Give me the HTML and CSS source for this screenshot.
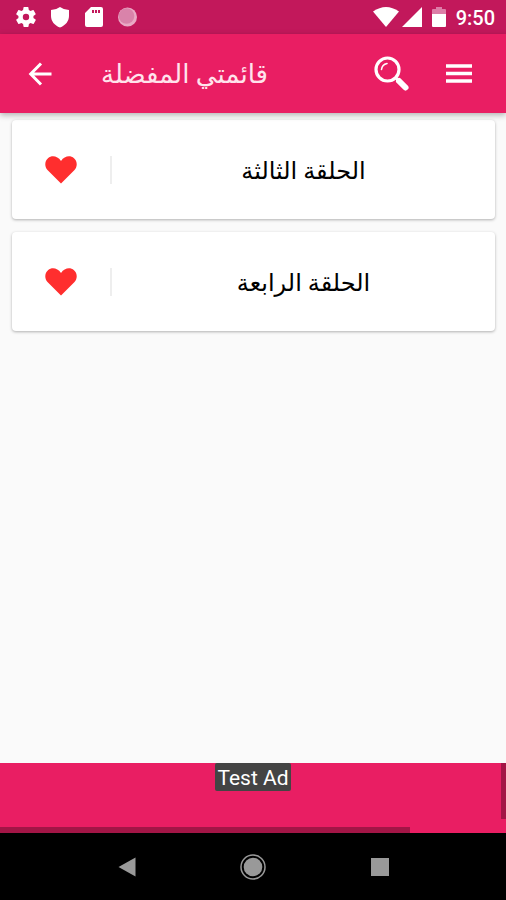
FILE: index.html
```html
<!DOCTYPE html>
<html lang="ar" dir="ltr">
<head>
<meta charset="utf-8">
<meta name="viewport" content="width=device-width, initial-scale=1">
<title>قائمتي المفضلة</title>
<link rel="stylesheet" href="styles.css">
</head>
<body>
<div class="status">
  <div class="status-left">
    <svg class="status-icon" viewBox="0 0 24 24"><path fill="#fff" d="M19.4 13c0-.3.1-.6.1-1s0-.7-.1-1l2.1-1.600c.2-.2.3-.4.1-.6l-2-3.500c-.1-.2-.4-.3-.6-.2l-2.500 1c-.5-.4-1.100-.7-1.700-1l-.4-2.600c0-.3-.2-.5-.4-.5h-4c-.3 0-.5.2-.5.4l-.4 2.700c-.6.2-1.100.6-1.700 1L4.900 5.100c-.2-.1-.5 0-.6.2l-2 3.500c-.1.2-.1.5.1.6L4.500 11c0 .3-.1.7-.1 1s0 .7.1 1l-2.100 1.600c-.2.2-.3.4-.1.6l2 3.500c.1.2.4.3.6.2l2.500-1c.5.4 1.100.7 1.700 1l.4 2.600c0 .3.2.4.5.4h4c.2 0 .4-.2.5-.4l.4-2.600c.6-.3 1.200-.6 1.700-1l2.500 1c.2.1.5 0 .6-.2l2-3.500c.1-.2.1-.5-.1-.6zM12 15.200a3.200 3.200 0 1 1 0-6.400 3.200 3.200 0 0 1 0 6.400z"/></svg>
    <svg class="status-icon" viewBox="0 0 24 24"><path fill="#fff" d="M12 2q4 3 9 3v6c0 5-3.500 9.500-9 11.500-5.500-2-9-6.500-9-11.500V5q5 0 9-3z"/></svg>
    <svg class="status-icon" viewBox="0 0 24 24"><path fill="#fff" fill-rule="evenodd" d="M9 2h10a2 2 0 0 1 2 2v16a2 2 0 0 1-2 2H5a2 2 0 0 1-2-2V8zM10 5v3h2V5zM13 5v3h2V5zM16 5v3h2V5z"/></svg>
    <svg class="status-icon" viewBox="0 0 24 24"><circle cx="11.500" cy="12" r="9.500" fill="#eaa9c5"/><path fill="#fff" d="M18.500 5.500A9.500 9.500 0 0 1 6 20 9.500 9.500 0 0 0 18.500 5.500z"/><circle cx="10.500" cy="11" r="7.800" fill="#d983aa"/></svg>
  </div>
  <div class="status-right">
    <svg class="wifi" viewBox="0 0 26 20"><path fill="#fff" d="M0 4.500Q13-4.500 26 4.500L13 20z"/></svg>
    <svg class="signal" viewBox="0 0 20 20"><path fill="#fff" d="M20 0v20H0z"/></svg>
    <svg class="battery" viewBox="0 0 14 22"><path fill="#dd7da7" d="M4 1h6v2h3a1 1 0 0 1 1 1v4H0V4a1 1 0 0 1 1-1h3z"/><path fill="#fff" d="M0 8h14v12a1 1 0 0 1-1 1H1a1 1 0 0 1-1-1z"/></svg>
    <span class="clock">9:50</span>
  </div>
</div>
<header class="toolbar">
  <button class="tool" aria-label="رجوع"><svg width="24" height="24" viewBox="0 0 24 24"><path d="M23.500 12H3M13 1.500L2.700 12 13 22.500" fill="none" stroke="#fff" stroke-width="3"/></svg></button>
  <h1 class="title" dir="rtl">قائمتي المفضلة</h1>
  <button class="tool" aria-label="بحث"><svg width="36" height="36" viewBox="0 0 36 36"><g fill="none" stroke="#fff"><circle cx="13.500" cy="13.500" r="11.500" stroke-width="3.200"/><path d="M7.500 13.500a7 7 0 0 1 5.500-6" stroke-width="1.600" stroke-linecap="round"/><path d="M21.500 21.500l3 3" stroke-width="3"/><path d="M25 25l6.500 6.500" stroke-width="6" stroke-linecap="round"/></g></svg></button>
  <button class="tool" aria-label="القائمة"><svg width="26" height="19" viewBox="0 0 26 19"><path d="M0 2h26M0 9.500h26M0 17h26" stroke="#fff" stroke-width="3.400"/></svg></button>
</header>
<main class="list">
  <article class="card">
    <button class="fav" aria-label="المفضلة"><svg width="32" height="28" viewBox="0 0 32 28"><path fill="#ff2e2e" d="M16 27.500L2.500 14C-1 10 0 4.500 3 2.200 7-1 12.500 0 16 5 19.500 0 25-1 29 2.200c3 2.300 4 7.800.5 11.800z"/></svg></button>
    <h2 class="episode" dir="rtl">الحلقة الثالثة</h2>
  </article>
  <article class="card">
    <button class="fav" aria-label="المفضلة"><svg width="32" height="28" viewBox="0 0 32 28"><path fill="#ff2e2e" d="M16 27.500L2.500 14C-1 10 0 4.500 3 2.200 7-1 12.500 0 16 5 19.500 0 25-1 29 2.200c3 2.300 4 7.800.5 11.800z"/></svg></button>
    <h2 class="episode" dir="rtl">الحلقة الرابعة</h2>
  </article>
</main>
<aside class="ad"><span class="ad-label">Test Ad</span></aside>
<nav class="nav">
  <button class="key" aria-label="Back"><svg width="18" height="20" viewBox="0 0 18 20"><path fill="#999" d="M17.500.5v19L.5 10z"/></svg></button>
  <button class="key" aria-label="Home"><svg width="26" height="26" viewBox="0 0 26 26"><circle cx="13" cy="13" r="12" fill="none" stroke="#999" stroke-width="1.500"/><circle cx="13" cy="13" r="9.300" fill="#999"/></svg></button>
  <button class="key" aria-label="Recents"><svg width="18" height="18" viewBox="0 0 18 18"><path fill="#999" d="M0 0h18v18H0z"/></svg></button>
</nav>
</body>
</html>
```
FILE: styles.css
```css
* { box-sizing: border-box; }
body {
  margin: 0;
  min-height: 100vh;
  display: flex;
  flex-direction: column;
  background: #fafafa;
  font-family: Roboto, "DejaVu Sans", sans-serif;
}
svg { display: block; }
button { border: 0; padding: 0; background: none; cursor: pointer; }
h1, h2 { margin: 0; font-weight: 400; }

.status {
  display: flex;
  justify-content: space-between;
  align-items: center;
  height: 34px;
  padding: 0 11px 0 14px;
  background: #c2185b;
}
.status-left { display: flex; gap: 10px; }
.status-icon { width: 24px; height: 24px; }
.status-right { display: flex; align-items: center; }
.wifi { width: 26px; height: 20px; margin-right: 3px; }
.signal { width: 20px; height: 20px; margin-right: 10px; }
.battery { width: 14px; height: 22px; margin-right: 10px; }
.clock { color: #fff; font-size: 20px; font-weight: 500; line-height: 24px; padding-top: 2px; }

.toolbar {
  display: flex;
  align-items: center;
  height: 79px;
  padding: 0 14px;
  background: #e91e63;
  box-shadow: 0 2px 6px rgba(0, 0, 0, 0.3);
  z-index: 1;
}
.tool { display: flex; align-items: center; justify-content: center; width: 67px; height: 48px; }
.tool:first-child { width: 52px; }
.title { flex: 1; padding-left: 35px; color: #ffe3ec; font-size: 26px; line-height: 36px; text-align: left; white-space: nowrap; }

.list { flex: 1; display: flex; flex-direction: column; gap: 13px; padding: 7px 11px 0 12px; }
.card {
  display: flex;
  align-items: center;
  height: 99px;
  border-radius: 4px;
  background: #fff;
  box-shadow: 0 1px 3px rgba(0, 0, 0, 0.3);
}
.fav {
  display: flex;
  align-items: center;
  justify-content: center;
  width: 100px;
  height: 28px;
  border-right: 2px solid #eee;
}
.episode { flex: 1; padding-top: 2px; color: #000; font-size: 24px; line-height: 36px; text-align: center; }

.ad {
  position: relative;
  display: flex;
  justify-content: center;
  align-items: flex-start;
  height: 70px;
  background: #e91e63;
}
.ad::before, .ad::after { content: ""; position: absolute; background: #a31546; }
.ad::before { left: 0; bottom: 0; width: 81%; height: 6px; }
.ad::after { right: 0; top: 0; width: 5px; height: 80%; }
.ad-label { padding: 2px 2px 0; border-radius: 2px; background: #444; color: #fff; font-size: 21px; line-height: 26px; }

.nav { display: flex; justify-content: center; height: 67px; background: #000; }
.key { display: flex; align-items: center; justify-content: center; width: 25%; }
```
